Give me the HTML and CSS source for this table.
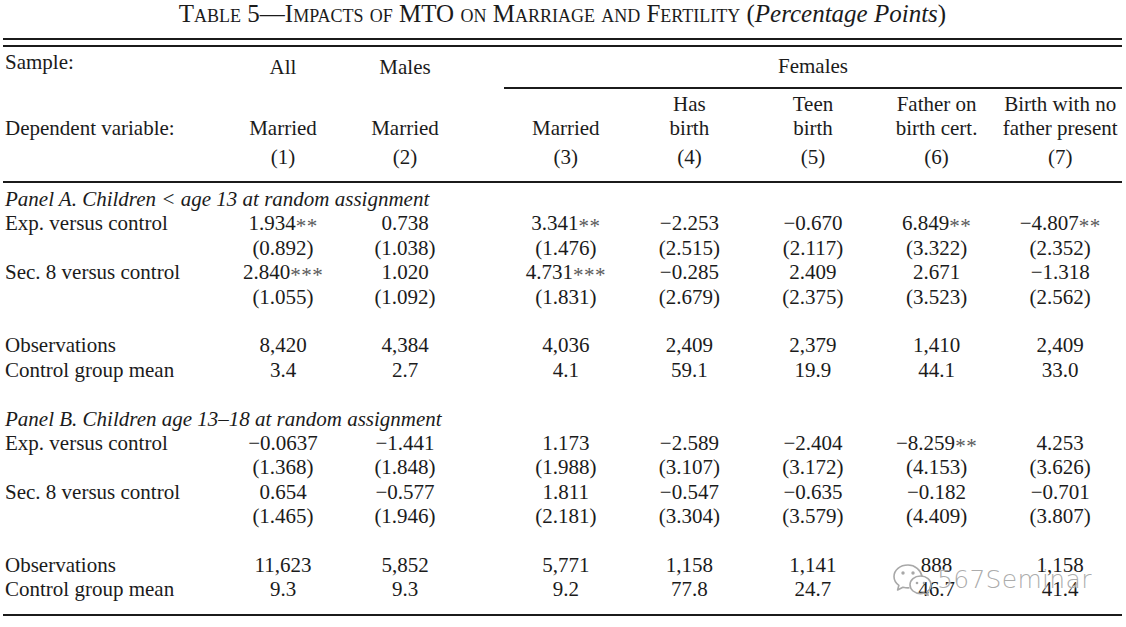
FILE: index.html
```html
<!DOCTYPE html>
<html lang="en">
<head>
<meta charset="utf-8">
<title>Table 5 — Impacts of MTO on Marriage and Fertility</title>
<link rel="stylesheet" href="styles.css">
</head>
<body>
<div class="page">
  <h1 class="title">Table 5—Impacts of MTO on Marriage and Fertility (<em>Percentage Points</em>)</h1>
  <div class="double-rule"></div>
  <table class="results">
    <colgroup>
      <col class="c-label">
      <col class="c-num">
      <col class="c-num">
      <col class="c-gap">
      <col class="c-fem">
      <col class="c-fem">
      <col class="c-fem">
      <col class="c-fem">
      <col class="c-fem">
    </colgroup>
    <tbody>
      <tr class="h-sample">
        <td class="label sample">Sample:</td>
        <td>All</td>
        <td>Males</td>
        <td></td>
        <td colspan="5" class="females">Females</td>
      </tr>
      <tr class="h-top">
        <td class="label"></td>
        <td></td>
        <td></td>
        <td></td>
        <td></td>
        <td>Has</td>
        <td>Teen</td>
        <td>Father on</td>
        <td>Birth with no</td>
      </tr>
      <tr class="h-mid">
        <td class="label">Dependent variable:</td>
        <td>Married</td>
        <td>Married</td>
        <td></td>
        <td>Married</td>
        <td>birth</td>
        <td>birth</td>
        <td>birth cert.</td>
        <td>father present</td>
      </tr>
      <tr class="h-num">
        <td class="label"></td>
        <td>(1)</td>
        <td>(2)</td>
        <td></td>
        <td>(3)</td>
        <td>(4)</td>
        <td>(5)</td>
        <td>(6)</td>
        <td>(7)</td>
      </tr>

      <tr class="panel first-panel"><td colspan="9" class="label"><em>Panel A. Children &lt; age 13 at random assignment</em></td></tr>
      <tr>
        <td class="label">Exp. versus control</td>
        <td>1.934<span class="sig">**</span></td>
        <td>0.738</td>
        <td></td>
        <td>3.341<span class="sig">**</span></td>
        <td>−2.253</td>
        <td>−0.670</td>
        <td>6.849<span class="sig">**</span></td>
        <td>−4.807<span class="sig">**</span></td>
      </tr>
      <tr>
        <td class="label"></td>
        <td>(0.892)</td>
        <td>(1.038)</td>
        <td></td>
        <td>(1.476)</td>
        <td>(2.515)</td>
        <td>(2.117)</td>
        <td>(3.322)</td>
        <td>(2.352)</td>
      </tr>
      <tr>
        <td class="label">Sec. 8 versus control</td>
        <td>2.840<span class="sig">***</span></td>
        <td>1.020</td>
        <td></td>
        <td>4.731<span class="sig">***</span></td>
        <td>−0.285</td>
        <td>2.409</td>
        <td>2.671</td>
        <td>−1.318</td>
      </tr>
      <tr>
        <td class="label"></td>
        <td>(1.055)</td>
        <td>(1.092)</td>
        <td></td>
        <td>(1.831)</td>
        <td>(2.679)</td>
        <td>(2.375)</td>
        <td>(3.523)</td>
        <td>(2.562)</td>
      </tr>
      <tr class="blank"><td colspan="9"></td></tr>
      <tr>
        <td class="label">Observations</td>
        <td>8,420</td>
        <td>4,384</td>
        <td></td>
        <td>4,036</td>
        <td>2,409</td>
        <td>2,379</td>
        <td>1,410</td>
        <td>2,409</td>
      </tr>
      <tr>
        <td class="label">Control group mean</td>
        <td>3.4</td>
        <td>2.7</td>
        <td></td>
        <td>4.1</td>
        <td>59.1</td>
        <td>19.9</td>
        <td>44.1</td>
        <td>33.0</td>
      </tr>
      <tr class="blank"><td colspan="9"></td></tr>

      <tr class="panel"><td colspan="9" class="label"><em>Panel B. Children age 13–18 at random assignment</em></td></tr>
      <tr>
        <td class="label">Exp. versus control</td>
        <td>−0.0637</td>
        <td>−1.441</td>
        <td></td>
        <td>1.173</td>
        <td>−2.589</td>
        <td>−2.404</td>
        <td>−8.259<span class="sig">**</span></td>
        <td>4.253</td>
      </tr>
      <tr>
        <td class="label"></td>
        <td>(1.368)</td>
        <td>(1.848)</td>
        <td></td>
        <td>(1.988)</td>
        <td>(3.107)</td>
        <td>(3.172)</td>
        <td>(4.153)</td>
        <td>(3.626)</td>
      </tr>
      <tr>
        <td class="label">Sec. 8 versus control</td>
        <td>0.654</td>
        <td>−0.577</td>
        <td></td>
        <td>1.811</td>
        <td>−0.547</td>
        <td>−0.635</td>
        <td>−0.182</td>
        <td>−0.701</td>
      </tr>
      <tr>
        <td class="label"></td>
        <td>(1.465)</td>
        <td>(1.946)</td>
        <td></td>
        <td>(2.181)</td>
        <td>(3.304)</td>
        <td>(3.579)</td>
        <td>(4.409)</td>
        <td>(3.807)</td>
      </tr>
      <tr class="blank"><td colspan="9"></td></tr>
      <tr>
        <td class="label">Observations</td>
        <td>11,623</td>
        <td>5,852</td>
        <td></td>
        <td>5,771</td>
        <td>1,158</td>
        <td>1,141</td>
        <td>888</td>
        <td>1,158</td>
      </tr>
      <tr class="last">
        <td class="label">Control group mean</td>
        <td>9.3</td>
        <td>9.3</td>
        <td></td>
        <td>9.2</td>
        <td>77.8</td>
        <td>24.7</td>
        <td>46.7</td>
        <td>41.4</td>
      </tr>
    </tbody>
  </table>

  <div class="watermark">
    <svg class="wm-icon" viewBox="0 0 44 34" width="44" height="34" aria-hidden="true">
      <path d="M17 3C9 3 3 8 3 14.5c0 3.6 1.9 6.7 4.9 8.8L6.6 28l5.3-2.8c1.6.4 3.3.7 5.1.7.5 0 1 0 1.5-.1" fill="none" stroke="#a8a8a8" stroke-width="1.6" stroke-linejoin="round"/>
      <path d="M31 14.2C29.8 8 24 3 17 3" fill="none" stroke="#a8a8a8" stroke-width="1.6"/>
      <circle cx="12" cy="11" r="1.7" fill="#a8a8a8"/>
      <circle cx="22" cy="11" r="1.7" fill="#a8a8a8"/>
      <path d="M29.5 14C23.5 14 19 18 19 22.8s4.5 8.8 10.5 8.8c1.3 0 2.5-.2 3.6-.5l4 2.2-1-3.6c2.3-1.600 3.9-4.1 3.9-6.9C40 18 35.5 14 29.5 14z" fill="none" stroke="#a8a8a8" stroke-width="1.6" stroke-linejoin="round"/>
      <circle cx="26" cy="21" r="1.3" fill="#a8a8a8"/>
      <circle cx="33" cy="21" r="1.3" fill="#a8a8a8"/>
    </svg>
    <span class="wm-text">567Seminar</span>
  </div>
</div>
</body>
</html>
```

FILE: styles.css
```css
* {
  box-sizing: border-box;
}

html,
body {
  margin: 0;
  background: #ffffff;
}

body {
  font-family: "Liberation Serif", "Times New Roman", serif;
  font-size: 21px;
  color: #1b1b1b;
}

.page {
  position: relative;
  width: 1126px;
  height: 627px;
  padding: 0 4px 0 3px;
  overflow: hidden;
}

.title {
  margin: 0;
  height: 38px;
  padding-top: 0;
  font-size: 25px;
  font-weight: normal;
  font-variant: small-caps;
  line-height: 28px;
  text-align: center;
}

.title em {
  font-variant: normal;
}

.double-rule {
  height: 9px;
  border-top: 2px solid #1b1b1b;
  border-bottom: 2px solid #1b1b1b;
}

.results {
  width: 100%;
  table-layout: fixed;
  border-collapse: separate;
  border-spacing: 0;
}

.c-label {
  width: 219px;
}

.c-num {
  width: 122px;
}

.c-gap {
  width: 38px;
}

.c-fem {
  width: 123.6px;
}

.results td {
  padding: 0;
  text-align: center;
  white-space: nowrap;
  line-height: 24.4px;
  vertical-align: middle;
}

.results td.label {
  text-align: left;
  padding-left: 2px;
}

.h-sample td {
  height: 42px;
  padding-bottom: 2px;
}

.h-sample td.sample {
  padding-bottom: 12px;
}

.h-sample td.females {
  border-bottom: 2px solid #1b1b1b;
}

.h-top td {
  padding-top: 3px;
  line-height: 24px;
}

.h-mid td {
  line-height: 24px;
}

.h-num td {
  padding-top: 5px;
  padding-bottom: 12px;
  line-height: 24px;
  border-bottom: 2px solid #1b1b1b;
}

.first-panel td {
  padding-top: 4px;
}

.blank td {
  height: 24.4px;
}

.last td {
  padding-bottom: 12px;
  border-bottom: 2px solid #1b1b1b;
}

.sig {
  color: #5a5a5a;
  font-size: 1em;
  letter-spacing: 0.5px;
  vertical-align: -0.14em;
  line-height: 0;
}

.watermark {
  position: absolute;
  left: 891px;
  top: 562px;
  display: flex;
  align-items: center;
  gap: 2px;
}

.wm-icon {
  display: block;
}

.wm-text {
  font-family: "DejaVu Sans", "Liberation Sans", sans-serif;
  font-size: 25px;
  font-weight: 300;
  letter-spacing: 0.3px;
  color: rgba(150, 150, 150, 0.8);
  text-shadow: 0 0 1px #ffffff, 0 0 2px #ffffff;
}
```
